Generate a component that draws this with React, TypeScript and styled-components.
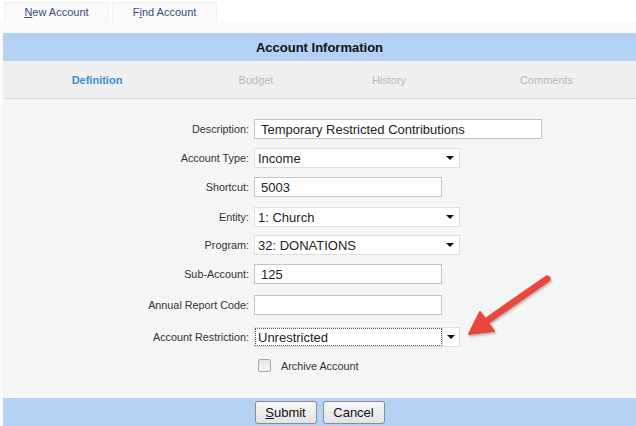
import styled, { createGlobalStyle } from "styled-components"

const Global = createGlobalStyle`
  html, body { margin: 0; padding: 0; }
  body {
    background: #fafafa;
    font-family: "Liberation Sans", Arial, sans-serif;
    width: 636px;
    height: 426px;
    overflow: hidden;
  }
`

const Page = styled.div`
  position: relative;
  width: 636px;
  height: 426px;
  display: flex;
  flex-direction: column;
`

const TopBar = styled.div`
  height: 22px;
  background: #fff;
  display: flex;
  align-items: flex-end;
  padding-left: 4px;
  gap: 3px;
`

const NavTab = styled.div`
  width: 105px;
  height: 20px;
  box-sizing: border-box;
  border: 1px solid #efefef;
  border-bottom: none;
  background: #fafafa;
  font-size: 11px;
  color: #3b4a7a;
  display: flex;
  align-items: center;
  justify-content: center;
  padding-bottom: 2px;
  u { text-decoration: underline; }
`

const Panel = styled.div`
  margin: 11px 0 0 3px;
  display: flex;
  flex-direction: column;
  flex: 1;
`

const Header = styled.div`
  height: 28px;
  background: #b4d0f2;
  display: flex;
  align-items: center;
  justify-content: center;
  font-size: 13px;
  font-weight: bold;
  color: #111;
`

const TabRow = styled.div`
  height: 37px;
  background: #efefef;
  border-bottom: 1px solid #dcdcdc;
  display: grid;
  grid-template-columns: 188px 130px 136px 1fr;
  align-items: center;
`

const Tab = styled.div<{ $active?: boolean }>`
  text-align: center;
  font-size: 11px;
  font-weight: ${(p) => (p.$active ? "bold" : "normal")};
  color: ${(p) => (p.$active ? "#3a8fd0" : "#b8b8b8")};
`

const Form = styled.div`
  flex: 1;
  background: #f5f5f5;
  padding-top: 20px;
  display: flex;
  flex-direction: column;
`

const Row = styled.div<{ $space?: number }>`
  display: grid;
  grid-template-columns: 246px 1fr;
  column-gap: 5px;
  align-items: center;
  height: 20px;
  margin-bottom: ${(p) => p.$space ?? 9}px;
`

const Label = styled.label`
  text-align: right;
  font-size: 10.8px;
  color: #333;
`

const TextBox = styled.div<{ $w: number }>`
  width: ${(p) => p.$w}px;
  height: 20px;
  box-sizing: border-box;
  border: 1px solid #c4c4c4;
  background: #fff;
  font-size: 13px;
  color: #222;
  padding: 0 6px;
  display: flex;
  align-items: center;
`

const SelectBox = styled.div`
  width: 206px;
  height: 20px;
  box-sizing: border-box;
  border: 1px solid #dedede;
  background: #fff;
  font-size: 13px;
  color: #222;
  padding-left: 3px;
  display: flex;
  align-items: center;
  justify-content: space-between;
`

const Caret = styled.span`
  width: 0;
  height: 0;
  margin-right: 5px;
  border-left: 4px solid transparent;
  border-right: 4px solid transparent;
  border-top: 4px solid #111;
`

const FocusSelect = styled.div`
  width: 206px;
  height: 20px;
  display: flex;
  box-sizing: border-box;
  border: 1px solid #dedede;
  background: #fff;
`

const FocusText = styled.div`
  flex: 1;
  border: 1px dotted #555;
  font-size: 13px;
  color: #222;
  padding-left: 2px;
  display: flex;
  align-items: center;
`

const CaretBox = styled.div`
  width: 16px;
  display: flex;
  align-items: center;
  justify-content: center;
  border-left: 1px solid #dedede;
  span { margin-right: 0; }
`

const CheckRow = styled.div`
  display: flex;
  align-items: center;
  margin-left: 255px;
  margin-top: 3px;
  gap: 10px;
  font-size: 10.8px;
  color: #333;
`

const CheckBox = styled.span`
  width: 11px;
  height: 11px;
  border: 1px solid #a8a8a8;
  border-radius: 2px;
  background: linear-gradient(#e4e4e4, #f8f8f8);
`

const Footer = styled.div`
  height: 28px;
  background: #b4d0f2;
  display: flex;
  align-items: flex-end;
  justify-content: center;
  gap: 6px;
`

const Button = styled.button`
  width: 62px;
  height: 23px;
  box-sizing: border-box;
  border: 1px solid #8c8c8c;
  border-radius: 3px;
  background: linear-gradient(#f7f7f7, #e2e2e2);
  font-family: "Liberation Sans", Arial, sans-serif;
  font-size: 13px;
  color: #111;
  padding: 0;
  margin-bottom: 2px;
  u { text-decoration: underline; }
`

const Overlay = styled.svg`
  position: absolute;
  left: 0;
  top: 0;
  pointer-events: none;
`

export default function App() {
  return (
    <Page>
      <Global />
      <TopBar>
        <NavTab><span><u>N</u>ew Account</span></NavTab>
        <NavTab><span>F<u>i</u>nd Account</span></NavTab>
      </TopBar>
      <Panel>
        <Header>Account Information</Header>
        <TabRow>
          <Tab $active>Definition</Tab>
          <Tab>Budget</Tab>
          <Tab>History</Tab>
          <Tab>Comments</Tab>
        </TabRow>
        <Form>
          <Row>
            <Label>Description:</Label>
            <TextBox $w={288}>Temporary Restricted Contributions</TextBox>
          </Row>
          <Row>
            <Label>Account Type:</Label>
            <SelectBox>Income<Caret /></SelectBox>
          </Row>
          <Row $space={10}>
            <Label>Shortcut:</Label>
            <TextBox $w={188}>5003</TextBox>
          </Row>
          <Row $space={8}>
            <Label>Entity:</Label>
            <SelectBox>1: Church<Caret /></SelectBox>
          </Row>
          <Row>
            <Label>Program:</Label>
            <SelectBox>32: DONATIONS<Caret /></SelectBox>
          </Row>
          <Row $space={11}>
            <Label>Sub-Account:</Label>
            <TextBox $w={188}>125</TextBox>
          </Row>
          <Row $space={12}>
            <Label>Annual Report Code:</Label>
            <TextBox $w={188} />
          </Row>
          <Row $space={9}>
            <Label>Account Restriction:</Label>
            <FocusSelect>
              <FocusText>Unrestricted</FocusText>
              <CaretBox><Caret /></CaretBox>
            </FocusSelect>
          </Row>
          <CheckRow>
            <CheckBox />
            Archive Account
          </CheckRow>
        </Form>
        <Footer>
          <Button><u>S</u>ubmit</Button>
          <Button>Cancel</Button>
        </Footer>
      </Panel>
      <Overlay width="636" height="426" viewBox="0 0 636 426">
        <defs>
          <filter id="sh" x="-20%" y="-20%" width="140%" height="140%">
            <feDropShadow dx="1" dy="1.5" stdDeviation="1.2" floodColor="#000" floodOpacity="0.3" />
          </filter>
        </defs>
        <g filter="url(#sh)" fill="#e8463c" stroke="#e8463c">
          <line x1="547" y1="279" x2="488" y2="320" strokeWidth="7" strokeLinecap="round" />
          <polygon points="469,334 480,312 494,331" strokeWidth="2" strokeLinejoin="round" />
        </g>
      </Overlay>
    </Page>
  )
}
